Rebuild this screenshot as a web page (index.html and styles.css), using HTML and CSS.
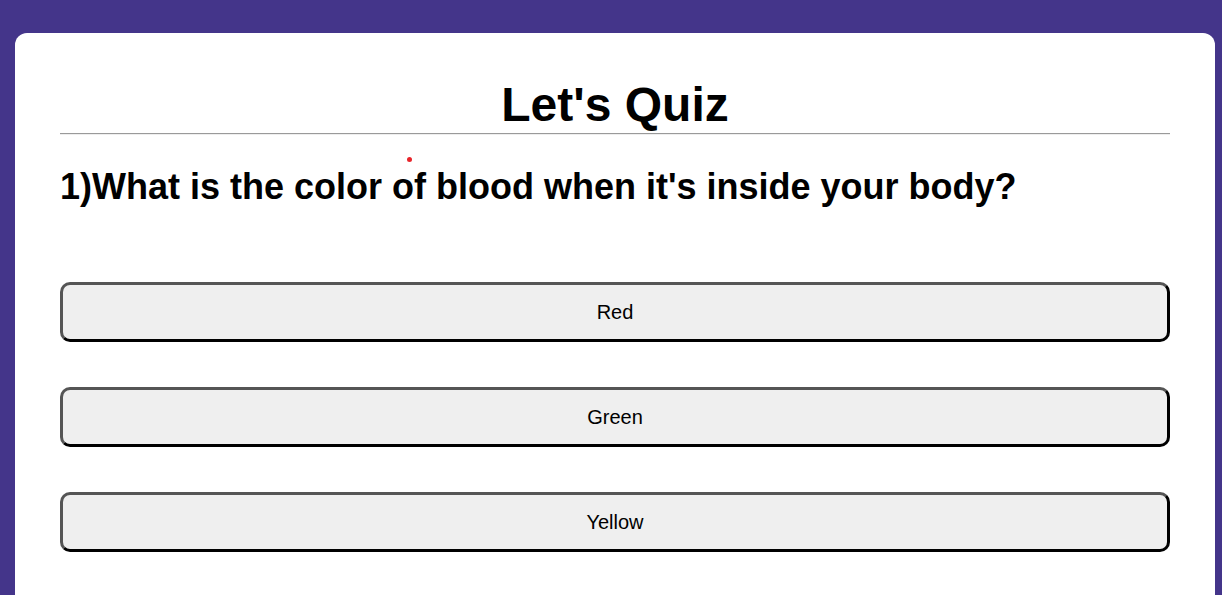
FILE: index.html
```html
<!DOCTYPE html>
<html lang="en">
<head>
<meta charset="utf-8">
<title>Let's Quiz</title>
<link rel="stylesheet" href="styles.css">
</head>
<body>
  <main class="card">
    <h1 class="title">Let's Quiz</h1>
    <hr class="divider">
    <div class="question-wrap">
      <span class="dot"></span>
      <h2 class="question">1)What is the color of blood when it's inside your body?</h2>
    </div>
    <div class="options">
      <button class="option">Red</button>
      <button class="option">Green</button>
      <button class="option">Yellow</button>
    </div>
  </main>
</body>
</html>
```
FILE: styles.css
```css
html, body {
  margin: 0;
  padding: 0;
}
body {
  background: #44358a;
  font-family: "Liberation Sans", Arial, sans-serif;
  padding: 33px 0 0 15px;
  overflow: hidden;
}
.card {
  width: 1200px;
  box-sizing: border-box;
  background: #fff;
  border-radius: 12px 12px 0 0;
  padding: 44px 45px 60px;
  min-height: 700px;
}
.title {
  margin: 0;
  font-size: 48px;
  font-weight: bold;
  text-align: center;
  color: #000;
  line-height: 55px;
}
.divider {
  margin: 1px 0 0;
  border: 0;
  border-top: 1px solid #9a9a9a;
  border-bottom: 1px solid #eeeeee;
  height: 0;
}
.question-wrap {
  position: relative;
  margin-top: 31px;
}
.dot {
  position: absolute;
  left: 347px;
  top: -9px;
  width: 5px;
  height: 5px;
  border-radius: 50%;
  background: #e8242a;
}
.question {
  margin: 0;
  font-size: 36px;
  font-weight: bold;
  line-height: 41px;
  color: #000;
}
.options {
  margin-top: 75px;
  display: flex;
  flex-direction: column;
  gap: 45px;
}
.option {
  display: block;
  width: 100%;
  height: 60px;
  box-sizing: border-box;
  background: #efefef;
  border: 3px solid;
  border-color: #555 #000 #000 #555;
  border-radius: 10px;
  font-family: "Liberation Sans", Arial, sans-serif;
  font-size: 20px;
  color: #000;
  padding: 0;
  cursor: pointer;
}
```
